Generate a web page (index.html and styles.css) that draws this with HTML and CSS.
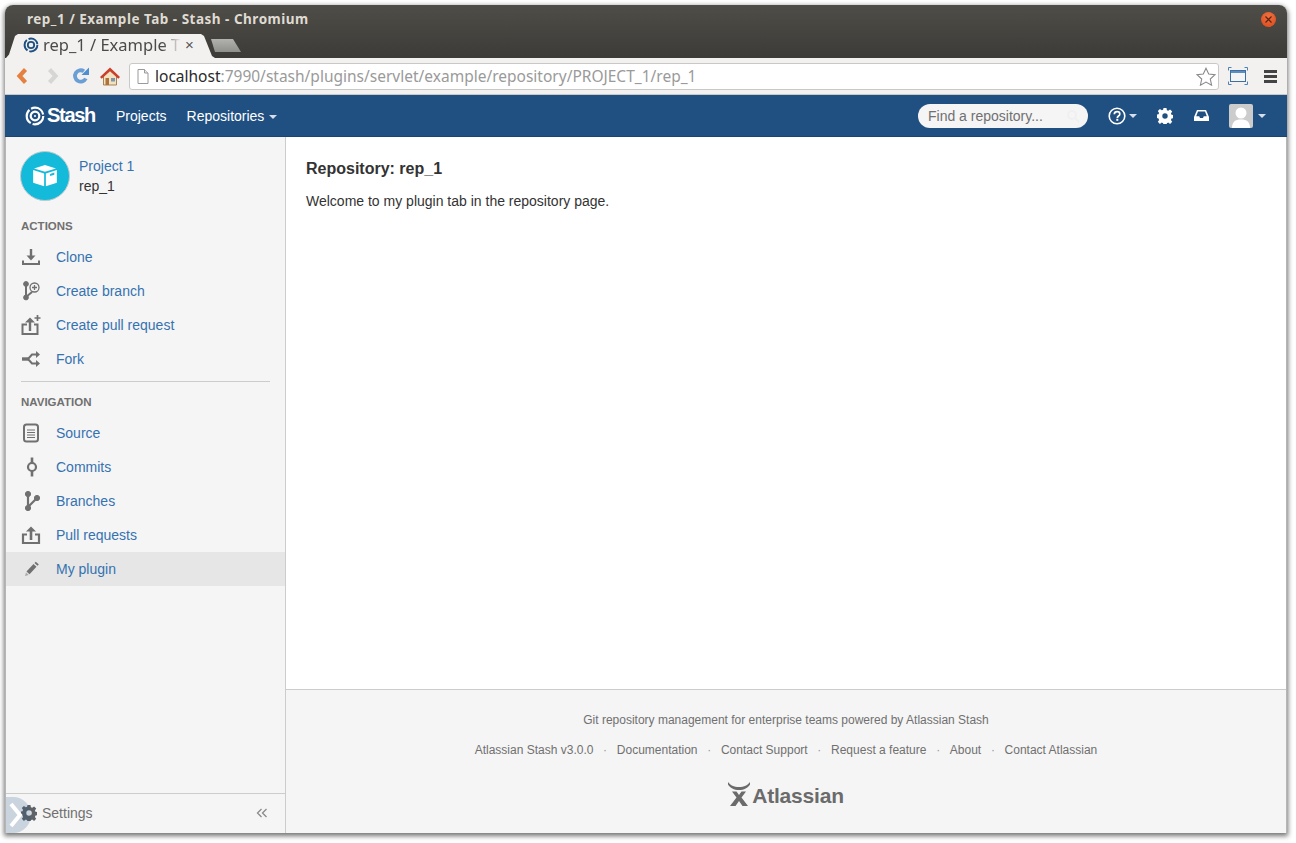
FILE: index.html
```html
<!DOCTYPE html>
<html lang="en">
<head>
  <meta charset="UTF-8">
  <title>rep_1 / Example Tab - Stash - Chromium</title>
  <link rel="stylesheet" href="styles.css">
</head>
<body>
  <div class="window">
    <div class="titlebar">
      <div class="title-row">
        <span class="title-text">rep_1 / Example Tab - Stash - Chromium</span>
        <span class="close-btn">
          <svg width="9" height="9" viewBox="0 0 9 9"><path d="M1.500 1.500l6 6M7.500 1.500l-6 6" stroke="#5a2410" stroke-width="1.200"/></svg>
        </span>
      </div>
      <div class="tab-row">
        <div class="tab">
          <svg class="tab-icon" width="16" height="16" viewBox="0 0 18 18" fill="none" stroke="#205081">
            <circle cx="9" cy="9" r="7.200" stroke-width="2.200" stroke-dasharray="13 2.100"/>
            <circle cx="9" cy="9" r="3.600" stroke-width="2"/>
          </svg>
          <span class="tab-text">rep_1 / Example T</span>
          <span class="tab-close">×</span>
        </div>
        <div class="new-tab"></div>
      </div>
    </div>

    <div class="toolbar">
      <svg class="tool tool-back" width="14" height="18" viewBox="0 0 14 18"><path d="M10.500 2.500L4.500 9l6 6.500" fill="none" stroke="#e5813f" stroke-width="4.200"/></svg>
      <svg class="tool tool-fwd" width="14" height="18" viewBox="0 0 14 18"><path d="M3.500 2.500L9.500 9l-6 6.500" fill="none" stroke="#d6d6d4" stroke-width="4.200"/></svg>
      <svg class="tool tool-reload" width="18" height="18" viewBox="0 0 18 18">
        <path d="M13.800 11.500A5.700 5.700 0 1 1 12 4.300" fill="none" stroke="#6a9fd6" stroke-width="3.800"/>
        <path d="M9.500 8h7.500V0.500z" fill="#4d8fd0"/>
      </svg>
      <svg class="tool tool-home" width="20" height="19" viewBox="0 0 20 19">
        <path d="M3.500 9v9h13V9L10 3z" fill="#f3e2c0" stroke="#a8834e" stroke-width="1"/>
        <path d="M0 10L10 .5 20 10l-1.700 1.700L10 4.200l-8.300 7.500z" fill="#c9402c"/>
        <rect x="5.500" y="11" width="3.500" height="7" fill="#b0713a"/>
        <rect x="11" y="11" width="4" height="3.500" fill="#7d96ac"/>
      </svg>
      <div class="address">
        <svg class="page-icon" width="12" height="15" viewBox="0 0 12 15"><path d="M1 .5h6.500L11 4v10.500H1z" fill="#fff" stroke="#9a9a9a"/><path d="M7.500.5V4H11" fill="#e8e8e8" stroke="#9a9a9a"/></svg>
        <span class="url"><span class="url-host">localhost</span>:7990/stash/plugins/servlet/example/repository/PROJECT_1/rep_1</span>
        <svg class="star" width="20" height="19" viewBox="0 0 20 19"><path d="M10 1.200l2.700 5.800 6.300.7-4.700 4.300 1.300 6.200L10 15.100l-5.600 3.100 1.300-6.200L1 7.700l6.300-.7z" fill="#fff" stroke="#8a8a8a" stroke-width="1.100"/></svg>
      </div>
      <svg class="tool tool-full" width="20" height="18" viewBox="0 0 20 18">
        <path d="M.5 3.500v-3h3M16.500.5h3v3M.5 14.500v3h3M16.500 17.500h3v-3" fill="none" stroke="#4d82b8"/>
        <rect x="2.500" y="3.500" width="15" height="11" fill="#f4f4f4" stroke="#3d6f9f"/>
        <rect x="3" y="4" width="14" height="2" fill="#5b8fc4"/>
      </svg>
      <div class="menu-icon"><i></i><i></i><i></i></div>
    </div>

    <nav class="topnav">
      <a class="brand">
        <svg width="20" height="20" viewBox="0 0 20 20" fill="none" stroke="#fff">
          <circle cx="10" cy="10" r="8.300" stroke-width="2.200" stroke-dasharray="15.400 2"/>
          <circle cx="10" cy="10" r="4.300" stroke-width="2.200"/>
          <circle cx="10" cy="10" r="1" fill="#fff" stroke="none"/>
        </svg>
        <span class="brand-name">Stash</span>
      </a>
      <a class="nav-link">Projects</a>
      <a class="nav-link">Repositories<span class="caret"></span></a>
      <div class="nav-right">
        <div class="search">
          <span>Find a repository...</span>
          <svg width="14" height="14" viewBox="0 0 14 14" fill="none" stroke="#f0f0f0" stroke-width="2"><circle cx="6" cy="6" r="4"/><path d="M9 9l4 4"/></svg>
        </div>
        <a class="nav-icon help">
          <svg width="18" height="18" viewBox="0 0 18 18"><circle cx="9" cy="9" r="7.800" fill="none" stroke="#fff" stroke-width="1.600"/><path d="M6.300 7.200C6.400 5.500 7.600 4.700 9.100 4.700c1.600 0 2.700 1 2.700 2.300 0 2-2.500 2-2.500 3.900" fill="none" stroke="#fff" stroke-width="1.700"/><rect x="8.300" y="11.800" width="2" height="2" fill="#fff"/></svg>
          <span class="caret"></span>
        </a>
        <a class="nav-icon gear">
          <svg width="16" height="16" viewBox="0 0 16 16"><use href="#gear-shape" fill="#fff"/></svg>
        </a>
        <a class="nav-icon inbox">
          <svg width="17" height="13" viewBox="0 0 16 13"><path d="M3.500 1h9L15.500 8v4H.5V8z" fill="#fff"/><path d="M4.500 2.600h7l1.800 4.700H10.300L9.500 9h-3l-.8-1.700H2.700z" fill="#205081"/></svg>
        </a>
        <a class="user">
          <span class="avatar">
            <svg width="24" height="24" viewBox="0 0 24 24"><circle cx="12" cy="9" r="5.500" fill="#fff"/><path d="M3 24c0-6 3-8.500 9-8.500s9 2.500 9 8.500z" fill="#fff"/></svg>
          </span>
          <span class="caret"></span>
        </a>
      </div>
    </nav>

    <div class="main">
      <aside class="sidebar">
        <div class="repo-head">
          <span class="repo-avatar">
            <svg width="26" height="22" viewBox="0 0 30 26"><path d="M15 0l13 4-13 4L2 4z" fill="#fff"/><path d="M1 6l13 4v15L1 21z" fill="#fff"/><path d="M16 10l13-4v15l-13 4z" fill="#fff"/><path d="M21 10.500l5-1.500v2.500l-5 1.500z" fill="#14bad9"/></svg>
          </span>
          <div class="repo-names">
            <a class="link">Project 1</a>
            <span>rep_1</span>
          </div>
        </div>

        <h5 class="side-heading first">Actions</h5>
        <ul class="side-list">
          <li class="side-item">
            <svg class="side-icon" width="20" height="20" viewBox="0 0 20 20"><path d="M10 2v9" stroke="#707070" stroke-width="2.400"/><path d="M5.500 8.500h9L10 13.500z" fill="#707070"/><path d="M2 13.500V17h16v-3.500" fill="none" stroke="#707070" stroke-width="2"/></svg>
            <a class="link">Clone</a>
          </li>
          <li class="side-item">
            <svg class="side-icon" width="20" height="20" viewBox="0 0 20 20" fill="none" stroke="#707070"><path d="M5 3v13M5 16l6-5" stroke-width="2"/><circle cx="5" cy="3" r="2.400" fill="#707070"/><circle cx="5" cy="16.500" r="2.400" fill="#707070"/><circle cx="13.500" cy="6.500" r="4.500" stroke-width="1.300"/><path d="M13.500 4v5M11 6.500h5" stroke-width="1.300"/></svg>
            <a class="link">Create branch</a>
          </li>
          <li class="side-item">
            <svg class="side-icon" width="20" height="20" viewBox="0 0 20 20" fill="none" stroke="#707070"><path d="M6 9.500H1.500V19h15V9.500H13" stroke-width="2"/><path d="M9 16V6" stroke-width="2.400"/><path d="M4 7.500L9 2.500l5 5z" fill="#707070" stroke="none"/><path d="M16.500 0v6M13.500 3h6" stroke-width="1.700"/></svg>
            <a class="link">Create pull request</a>
          </li>
          <li class="side-item">
            <svg class="side-icon" width="20" height="20" viewBox="0 0 20 20" fill="none" stroke="#707070"><path d="M1 10h7" stroke-width="3.400"/><path d="M7 10l4-4.500h5M7 10l4 4.500h5" stroke-width="2"/><path d="M15 2l4 3.500-4 3.500zM15 11l4 3.500-4 3.500z" fill="#707070" stroke="none"/></svg>
            <a class="link">Fork</a>
          </li>
        </ul>

        <div class="side-divider"></div>

        <h5 class="side-heading">Navigation</h5>
        <ul class="side-list">
          <li class="side-item">
            <svg class="side-icon" width="20" height="20" viewBox="0 0 20 20" fill="none" stroke="#707070"><rect x="3" y="1.500" width="14" height="17" rx="2.500" stroke-width="2"/><path d="M6 7h8M6 9.500h8M6 12h8M6 14.500h8"/></svg>
            <a class="link">Source</a>
          </li>
          <li class="side-item">
            <svg class="side-icon" width="20" height="20" viewBox="0 0 20 20" fill="none" stroke="#707070"><circle cx="11" cy="10" r="4" stroke-width="2.200"/><path d="M11 0.500v5.500M11 14v5.500" stroke-width="2.600"/></svg>
            <a class="link">Commits</a>
          </li>
          <li class="side-item">
            <svg class="side-icon" width="20" height="20" viewBox="0 0 20 20" fill="none" stroke="#707070"><path d="M7 3v14M7 16l8-8" stroke-width="2.200"/><circle cx="7" cy="3" r="2.600" fill="#707070"/><circle cx="7" cy="17" r="2.600" fill="#707070"/><circle cx="16" cy="7" r="2.600" fill="#707070"/></svg>
            <a class="link">Branches</a>
          </li>
          <li class="side-item">
            <svg class="side-icon" width="20" height="20" viewBox="0 0 20 20" fill="none" stroke="#707070"><path d="M6 9.500H2V18h16V9.500h-4" stroke-width="2.200"/><path d="M10 15V5" stroke-width="2.600"/><path d="M5 6.500L10 1.500l5 5z" fill="#707070" stroke="none"/></svg>
            <a class="link">Pull requests</a>
          </li>
          <li class="side-item active">
            <svg class="side-icon" width="20" height="20" viewBox="0 0 20 20"><path d="M5.500 12.500l7-7.500 3 2.700-7 7.500z" fill="#707070"/><path d="M13.500 4l1.300-1.300 3 2.700-1.300 1.300z" fill="#707070"/><path d="M5 13.500l2.600 2.400-3.600 1z" fill="#a8a8a8"/></svg>
            <a class="link">My plugin</a>
          </li>
        </ul>

        <div class="side-footer">
          <svg width="16" height="16" viewBox="0 0 16 16"><use href="#gear-shape" fill="#5f6368"/></svg>
          <span class="settings-label">Settings</span>
          <svg class="collapse" width="12" height="10" viewBox="0 0 12 10" fill="none" stroke="#8a8a8a" stroke-width="1.300"><path d="M5.500 1L1.500 5l4 4M10.500 1l-4 4 4 4"/></svg>
        </div>
        <div class="tour-tab">
          <svg width="14" height="26" viewBox="0 0 14 26"><path d="M2 2l9 11-9 11" fill="none" stroke="#fff" stroke-width="4"/></svg>
        </div>
      </aside>

      <div class="content">
        <section class="page-body">
          <h2>Repository: rep_1</h2>
          <p>Welcome to my plugin tab in the repository page.</p>
        </section>
        <footer class="page-footer">
          <p class="foot-line">Git repository management for enterprise teams powered by Atlassian Stash</p>
          <ul class="foot-links">
            <li>Atlassian Stash v3.0.0</li>
            <li>Documentation</li>
            <li>Contact Support</li>
            <li>Request a feature</li>
            <li>About</li>
            <li>Contact Atlassian</li>
          </ul>
          <div class="atlassian-logo">
            <svg width="22" height="24" viewBox="0 0 22 24" fill="#6b6b6b"><path d="M0 0c2 3 6 5 11 5s9-2 11-5v2.500C20 6 16 8 11 8S2 6 0 2.500z"/><path d="M4 9.500h4.500L11 13l2.500-3.500H18l-4.500 6L20 24h-5.500L11 19l-3.500 5H2l6.500-8.500z"/></svg>
            <span>Atlassian</span>
          </div>
        </footer>
      </div>
    </div>
  </div>

  <svg class="defs" width="0" height="0">
    <defs>
      <path id="gear-shape" fill-rule="evenodd" d="M6.500 0h3l.4 2.200 1.300.6L13.100 1.500l2.100 2.100-1.300 1.900.6 1.300 2.200.4v3l-2.200.4-.6 1.300 1.300 1.900-2.100 2.100-1.900-1.300-1.300.6-.4 2.200h-3l-.4-2.200-1.300-.6-1.900 1.300-2.100-2.100 1.300-1.900-.6-1.300L-.7 9.700v-3l2.200-.4.6-1.300L.8 3.100 2.900 1l1.900 1.300 1.300-.6zM8 5.300a2.700 2.700 0 1 0 0 5.400 2.700 2.700 0 0 0 0-5.400z"/>
    </defs>
  </svg>
</body>
</html>
```

FILE: styles.css
```css
* {
  box-sizing: border-box;
}

html, body {
  margin: 0;
  padding: 0;
  height: 100%;
  overflow: hidden;
  background: #fff;
}

body {
  padding: 5px 9px 10px 5px;
  font-family: "Liberation Sans", Arial, sans-serif;
  font-size: 14px;
  color: #333;
}

.defs {
  position: absolute;
}

.window {
  height: 828px;
  display: flex;
  flex-direction: column;
  border-radius: 8px 8px 0 0;
  overflow: hidden;
  box-shadow: 0 2px 5px 1px rgba(0, 0, 0, 0.55);
}

/* chromium frame */
.titlebar {
  height: 53px;
  flex: none;
  background: linear-gradient(#4f4d48, #3c3b37);
}

.title-row {
  height: 28px;
  display: flex;
  align-items: center;
  justify-content: space-between;
  padding: 0 11px 0 22px;
}

.title-text {
  font-family: "Noto Sans", "Open Sans", sans-serif;
  font-size: 13.5px;
  font-weight: 700;
  letter-spacing: 0.5px;
  color: #dfdbd2;
}

.close-btn {
  width: 15px;
  height: 15px;
  border-radius: 50%;
  background: radial-gradient(circle at 50% 30%, #f0703f, #d9481a);
  display: flex;
  align-items: center;
  justify-content: center;
}

.tab-row {
  height: 25px;
  display: flex;
  align-items: flex-end;
  padding-left: 1px;
}

.tab {
  width: 209px;
  height: 24px;
  display: flex;
  align-items: center;
  padding: 0 0 2px 17px;
  background: #f2f1f0;
  clip-path: polygon(0 100%, 3px 85%, 9px 8%, 12px 0, 195px 0, 198px 8%, 206px 92%, 209px 100%);
}

.tab-icon {
  flex: none;
}

.tab-text {
  width: 138px;
  margin-left: 4px;
  font-family: "Noto Sans", "Open Sans", sans-serif;
  font-size: 16.5px;
  line-height: 20px;
  white-space: nowrap;
  color: #4a4a48;
  -webkit-mask-image: linear-gradient(to right, #000 120px, transparent 138px);
  mask-image: linear-gradient(to right, #000 120px, transparent 138px);
}

.tab-close {
  margin-left: 4px;
  font-size: 15px;
  line-height: 16px;
  color: #555;
}

.new-tab {
  width: 30px;
  height: 13px;
  margin: 0 0 6px -4px;
  background: linear-gradient(#b2b2ae, #8f8f8b);
  clip-path: polygon(0 0, 22px 0, 30px 100%, 4px 100%);
}

.toolbar {
  height: 37px;
  flex: none;
  display: flex;
  align-items: center;
  background: #f2f1f0;
  border-bottom: 1px solid #c9c9c7;
  padding-left: 10px;
}

.tool {
  flex: none;
}

.tool-fwd {
  margin-left: 17px;
}

.tool-reload {
  margin-left: 12px;
}

.tool-home {
  margin-left: 10px;
}

.address {
  width: 1090px;
  height: 27px;
  margin-left: 9px;
  display: flex;
  align-items: center;
  padding: 0 0 0 7px;
  background: #fff;
  border: 1px solid #c8c8c6;
  border-radius: 3px;
}

.url {
  margin-left: 6px;
  font-family: "Noto Sans", "Open Sans", sans-serif;
  font-size: 15.5px;
  color: #9a9a9a;
  white-space: nowrap;
}

.url-host {
  color: #2a2a2a;
}

.star {
  margin-left: auto;
  margin-right: 2px;
}

.tool-full {
  margin-left: 9px;
}

.menu-icon {
  margin-left: 16px;
  width: 13px;
  display: flex;
  flex-direction: column;
  gap: 2px;
}

.menu-icon i {
  height: 3px;
  background: #444;
}

/* stash header */
.topnav {
  height: 42px;
  flex: none;
  display: flex;
  align-items: center;
  padding: 0 21px 0 20px;
  background: #205081;
  border-bottom: 1px solid #1b4470;
  color: #fff;
}

.brand {
  display: flex;
  align-items: center;
  gap: 2px;
  margin-right: 21px;
}

.brand-name {
  font-size: 20px;
  font-weight: 700;
  letter-spacing: -1.3px;
}

.nav-link {
  margin-right: 20px;
  color: #fff;
  white-space: nowrap;
}

.caret {
  display: inline-block;
  width: 0;
  height: 0;
  margin-left: 5px;
  vertical-align: 2px;
  border-left: 4px solid transparent;
  border-right: 4px solid transparent;
  border-top: 4px solid #d5deea;
}

.nav-right {
  margin-left: auto;
  display: flex;
  align-items: center;
}

.search {
  width: 170px;
  height: 24px;
  display: flex;
  align-items: center;
  justify-content: space-between;
  padding: 0 8px 0 10px;
  background: #f5f5f5;
  border-radius: 12px;
  color: #707070;
}

.nav-icon {
  display: flex;
  align-items: center;
}

.help {
  margin-left: 20px;
}

.help .caret {
  margin-left: 3px;
}

.gear {
  margin-left: 20px;
}

.inbox {
  margin-left: 20px;
}

.user {
  margin-left: 19px;
  display: flex;
  align-items: center;
}

.avatar {
  width: 24px;
  height: 24px;
  overflow: hidden;
  border-radius: 2px;
  background: #ccc;
}

.avatar svg {
  display: block;
}

/* page */
.main {
  flex: 1;
  min-height: 0;
  display: flex;
  background: #fff;
  border-left: 1px solid #b5b5b5;
  border-right: 1px solid #b5b5b5;
}

.sidebar {
  width: 280px;
  flex: none;
  position: relative;
  display: flex;
  flex-direction: column;
  background: #f5f5f5;
  border-right: 1px solid #ccc;
}

.link {
  color: #3572b0;
}

.repo-head {
  display: flex;
  align-items: center;
  gap: 9px;
  margin: 14px 0 0 14px;
}

.repo-avatar {
  width: 50px;
  height: 50px;
  flex: none;
  display: flex;
  align-items: center;
  justify-content: center;
  border-radius: 50%;
  background: #14bad9;
  border: 1px solid #c4c9cc;
}

.repo-names {
  display: flex;
  flex-direction: column;
  gap: 4px;
  line-height: 16px;
}

.side-heading {
  margin: 12px 0 6px 15px;
  height: 16px;
  font-size: 11.5px;
  line-height: 16px;
  font-weight: 700;
  text-transform: uppercase;
  color: #707070;
}

.side-heading.first {
  margin-top: 17px;
}

.side-list {
  list-style: none;
  margin: 0;
  padding: 0;
}

.side-item {
  height: 34px;
  display: flex;
  align-items: center;
  padding-left: 15px;
}

.side-item.active {
  background: #e6e6e6;
}

.side-icon {
  flex: none;
  margin-right: 15px;
}

.side-divider {
  height: 1px;
  margin: 5px 15px 0;
  background: #ccc;
}

.side-footer {
  height: 40px;
  margin-top: auto;
  display: flex;
  align-items: center;
  padding: 0 17px 2px 15px;
  border-top: 1px solid #ccc;
  color: #707070;
}

.settings-label {
  margin-left: 5px;
}

.collapse {
  margin-left: auto;
}

.tour-tab {
  position: absolute;
  left: 0;
  bottom: 0;
  width: 25px;
  height: 36px;
  display: flex;
  align-items: center;
  padding-left: 3px;
  border-radius: 0 18px 18px 0;
  background: rgba(32, 80, 129, 0.2);
}

.content {
  flex: 1;
  display: flex;
  flex-direction: column;
  min-width: 0;
}

.page-body {
  flex: 1;
  padding: 22px 20px 0;
}

.page-body h2 {
  margin: 0 0 12px;
  font-size: 16px;
  line-height: 20px;
  font-weight: 700;
}

.page-body p {
  margin: 0;
  line-height: 20px;
}

.page-footer {
  height: 144px;
  flex: none;
  padding-top: 22px;
  text-align: center;
  font-size: 12px;
  line-height: 16px;
  color: #707070;
  background: #f5f5f5;
  border-top: 1px solid #ccc;
}

.foot-line {
  margin: 0;
}

.foot-links {
  list-style: none;
  margin: 14px 0 0;
  padding: 0;
  display: flex;
  justify-content: center;
}

.foot-links li + li::before {
  content: "·";
  display: inline-block;
  width: 23.4px;
  color: #999;
}

.atlassian-logo {
  margin-top: 24px;
  display: flex;
  justify-content: center;
  align-items: flex-end;
  gap: 2px;
  color: #6b6b6b;
}

.atlassian-logo span {
  font-size: 21px;
  line-height: 21px;
  font-weight: 700;
  letter-spacing: -0.2px;
}
```
